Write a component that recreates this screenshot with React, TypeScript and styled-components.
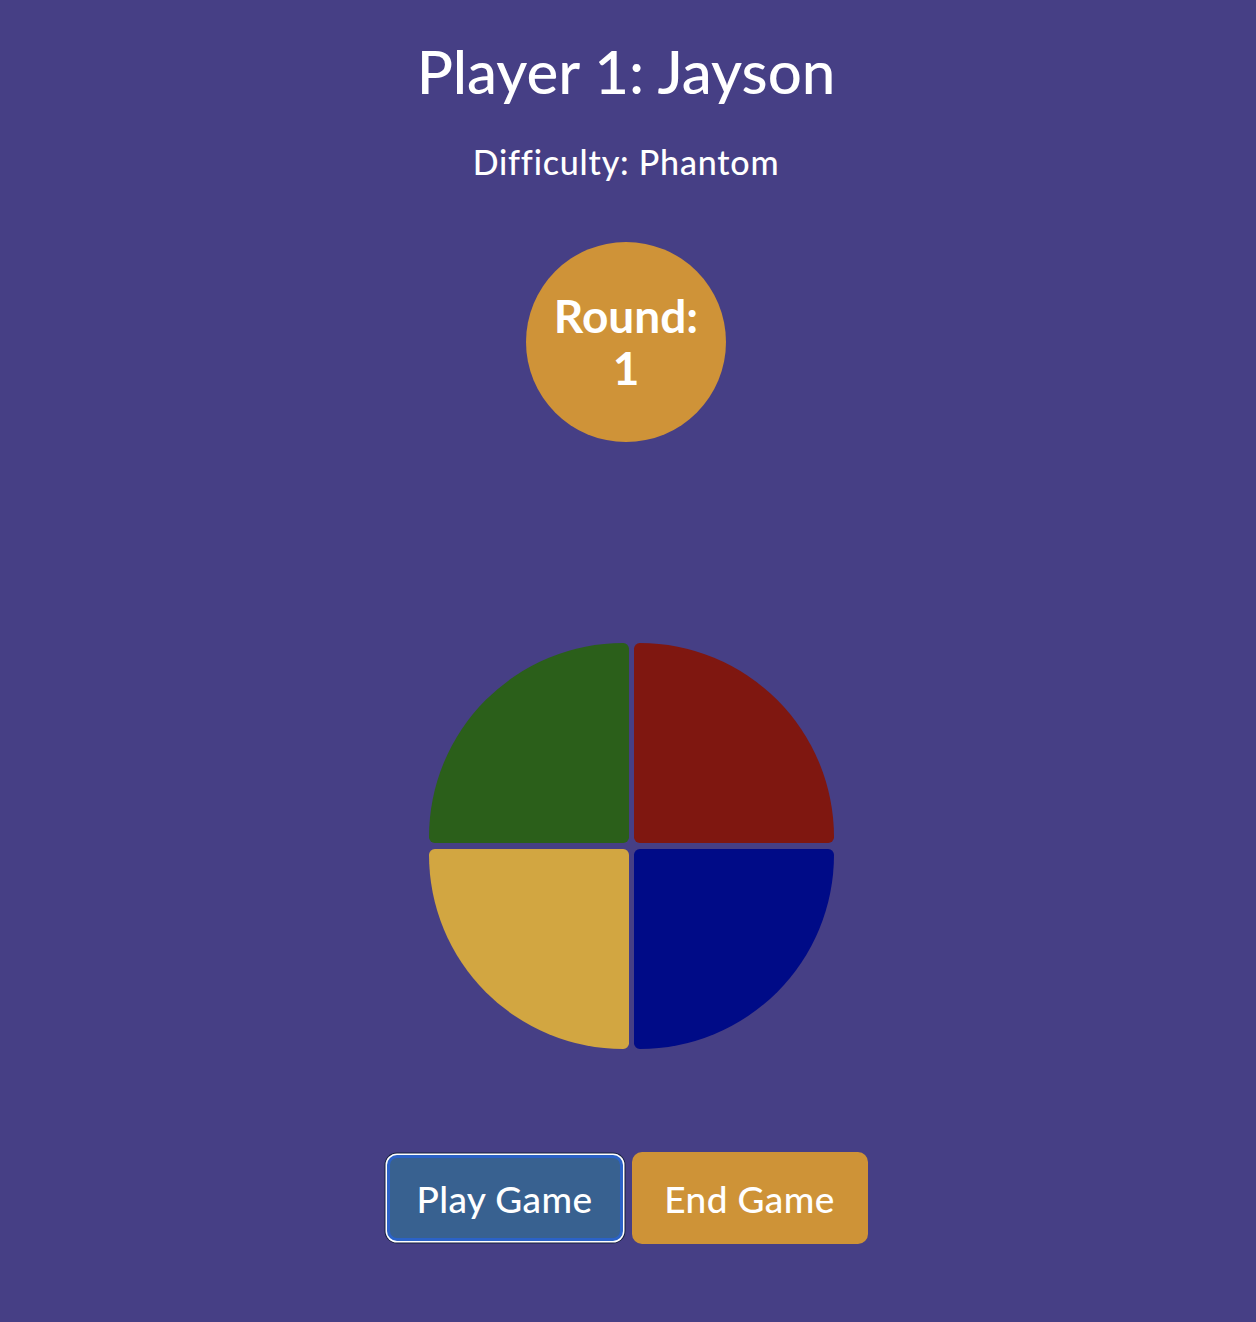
import React from "react";
import styled, { createGlobalStyle } from "styled-components";

const GlobalStyle = createGlobalStyle`
  html, body {
    margin: 0;
    padding: 0;
    background: #463f85;
  }
`;

const Page = styled.div`
  min-height: 1322px;
  box-sizing: border-box;
  padding: 29px 4px 0 0;
  display: flex;
  flex-direction: column;
  align-items: center;
  background: #463f85;
  color: #ffffff;
  font-family: "Lato", "Noto Sans", sans-serif;
`;

const Title = styled.h1`
  margin: 0;
  font-size: 60px;
  font-weight: 500;
  line-height: 84px;
`;

const Difficulty = styled.h3`
  margin: 29px 0 0;
  font-size: 34px;
  font-weight: 500;
  line-height: 40px;
  letter-spacing: 0.8px;
`;

const RoundBadge = styled.div`
  margin-top: 60px;
  width: 200px;
  height: 200px;
  border-radius: 50%;
  background: #cf9338;
  display: flex;
  flex-direction: column;
  align-items: center;
  justify-content: center;
  font-size: 46px;
  font-weight: 700;
  line-height: 52px;
  text-align: center;
`;

const Board = styled.div`
  margin-top: 201px;
  margin-left: 11px;
  display: grid;
  grid-template-columns: 200px 200px;
  grid-template-rows: 200px 200px;
  column-gap: 5px;
  row-gap: 6px;
`;

type Corner = "tl" | "tr" | "bl" | "br";

const radii: Record<Corner, string> = {
  tl: "200px 6px 6px 6px",
  tr: "6px 200px 6px 6px",
  br: "6px 6px 200px 6px",
  bl: "6px 6px 6px 200px",
};

const Pad = styled.button<{ $color: string; $corner: Corner }>`
  border: none;
  padding: 0;
  cursor: pointer;
  background: ${(p) => p.$color};
  border-radius: ${(p) => radii[p.$corner]};
`;

const Controls = styled.div`
  margin-top: 103px;
  margin-left: 2px;
  display: flex;
  gap: 9px;
  align-items: center;
`;

const Button = styled.button<{ $color: string; $focused?: boolean }>`
  width: 236px;
  height: ${(p) => (p.$focused ? "86px" : "92px")};
  box-sizing: border-box;
  border-radius: 10px;
  border: ${(p) => (p.$focused ? "3px solid #2b62c7" : "none")};
  box-shadow: ${(p) =>
    p.$focused ? "0 0 0 1.5px #ffffff, 0 0 0 2.5px #17203d" : "none"};
  background: ${(p) => p.$color};
  color: #ffffff;
  font-family: "Lato", "Noto Sans", sans-serif;
  font-size: 37px;
  font-weight: 500;
  letter-spacing: 0.4px;
  cursor: pointer;
`;

export default function App() {
  return (
    <>
      <GlobalStyle />
      <Page>
        <Title>Player 1: Jayson</Title>
        <Difficulty>Difficulty: Phantom</Difficulty>
        <RoundBadge>
          <div>Round:</div>
          <div>1</div>
        </RoundBadge>
        <Board>
          <Pad $color="#2b5f1a" $corner="tl" aria-label="green" />
          <Pad $color="#7f1710" $corner="tr" aria-label="red" />
          <Pad $color="#d2a641" $corner="bl" aria-label="yellow" />
          <Pad $color="#000b87" $corner="br" aria-label="blue" />
        </Board>
        <Controls>
          <Button $color="#386190" $focused>
            Play Game
          </Button>
          <Button $color="#ce9337">End Game</Button>
        </Controls>
      </Page>
    </>
  );
}
